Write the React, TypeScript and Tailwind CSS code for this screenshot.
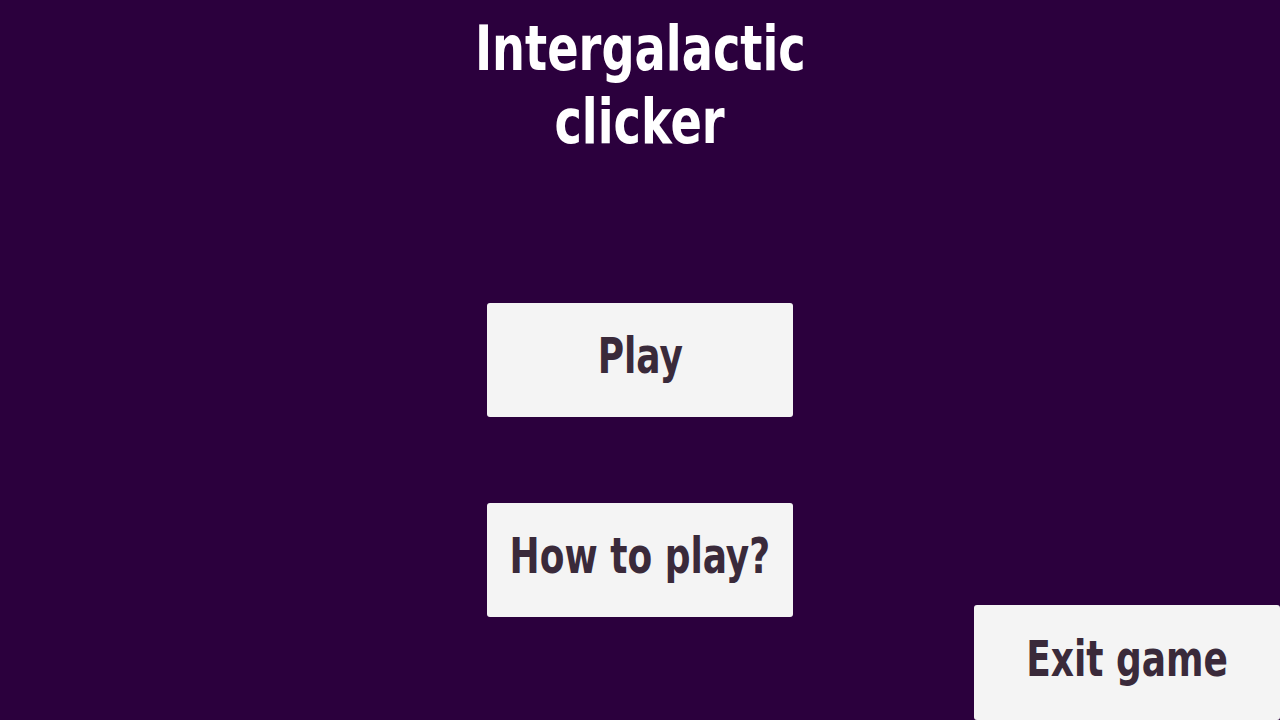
import React from 'react';

// no narrow display font installed, so DejaVu Condensed squeezed a bit further
const font = "font-['DejaVu_Sans_Condensed',sans-serif]";

const MenuButton: React.FC<{ label: string; className?: string }> = ({ label, className = '' }) => (
  <button
    className={`w-[306px] h-[114px] pb-[7px] rounded-[3px] bg-[#f4f4f4] text-[#3a2a3a] text-[50px] font-bold flex items-center justify-center whitespace-nowrap ${font} ${className}`}
  >
    <span className="inline-block scale-x-[0.8]">{label}</span>
  </button>
);

export default function App() {
  return (
    <div className="w-full h-[720px] bg-[#2b003d] overflow-hidden flex flex-col">
      <h1 className={`pt-[12px] text-center text-white text-[62px] leading-[73px] font-bold ${font}`}>
        <span className="inline-block scale-x-[0.83]">Intergalactic</span>
        <br />
        <span className="inline-block scale-x-[0.83]">clicker</span>
      </h1>
      <div className="mt-[145px] flex flex-col items-center gap-[86px]">
        <MenuButton label="Play" />
        <MenuButton label="How to play?" />
      </div>
      <div className="-mt-[12px] flex justify-end">
        <MenuButton label="Exit game" className="h-[115px]" />
      </div>
    </div>
  );
}
